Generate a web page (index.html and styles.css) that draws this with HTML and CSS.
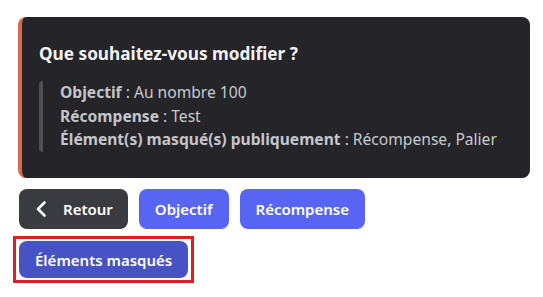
FILE: index.html
```html
<!DOCTYPE html>
<html lang="fr">
<head>
    <meta charset="UTF-8">
    <title>Modifier</title>
    <link rel="stylesheet" href="styles.css">
</head>
<body>

    <!-- Embed -->
    <div class="embed">
        <div class="embed-title">Que souhaitez-vous modifier ?</div>
        <div class="quote">
            <div><strong>Objectif</strong> : Au nombre 100</div>
            <div><strong>Récompense</strong> : Test</div>
            <div><strong>Élément(s) masqué(s) publiquement</strong> : Récompense, Palier</div>
        </div>
    </div>

    <!-- Buttons -->
    <div class="row">
        <button class="btn btn-grey">
            <svg width="20" height="20" viewBox="0 0 20 20"><path d="M12.5 3.5 L6 10 L12.5 16.5" fill="none" stroke="#fff" stroke-width="2.6" stroke-linecap="round" stroke-linejoin="round"/></svg>
            Retour
        </button>
        <button class="btn btn-blue">Objectif</button>
        <button class="btn btn-blue">Récompense</button>
    </div>
    <div class="row row-second">
        <div class="highlight">
            <button class="btn btn-dark-blue">Éléments masqués</button>
        </div>
    </div>

</body>
</html>
```

FILE: styles.css
```css
/* General */
body {
    margin: 0;
    padding: 17px 0 0 18px;
    background: #fff;
    font-family: "Noto Sans", sans-serif;
}

/* Embed */
.embed {
    width: 512px;
    height: 161px;
    box-sizing: border-box;
    background: #242429;
    border-left: 4px solid #d66b4f;
    border-radius: 8px;
    padding: 26px 0 0 17px;
}

.embed-title {
    color: #f2f3f5;
    font-size: 17.2px;
    font-weight: 700;
    line-height: 22px;
}

.quote {
    margin-top: 16px;
    border-left: 4px solid #4e5058;
    border-radius: 4px;
    padding-left: 17px;
    color: #c9cace;
    font-size: 15.6px;
    line-height: 23.5px;
}

.quote strong {
    color: #c4c5ca;
}

/* Buttons */
.row {
    display: flex;
    gap: 11px;
    margin-top: 11px;
    margin-left: 1px;
}

.row-second {
    margin-top: 7px;
    margin-left: -5px;
}

.btn {
    height: 40px;
    padding: 0 16px;
    border: none;
    border-radius: 8px;
    color: #fff;
    font-family: "Noto Sans", sans-serif;
    font-size: 15px;
    font-weight: 600;
    display: flex;
    align-items: center;
    gap: 11px;
}

.btn-grey {
    background: #3a3a41;
    padding: 0 15px 0 13px;
}

.btn-blue {
    background: #5865f2;
}

.btn-dark-blue {
    background: #4752c4;
    height: 37px;
    padding: 0 16px;
}

.highlight {
    border: 3px solid #e31b23;
    padding: 2px 3px;
}
```
